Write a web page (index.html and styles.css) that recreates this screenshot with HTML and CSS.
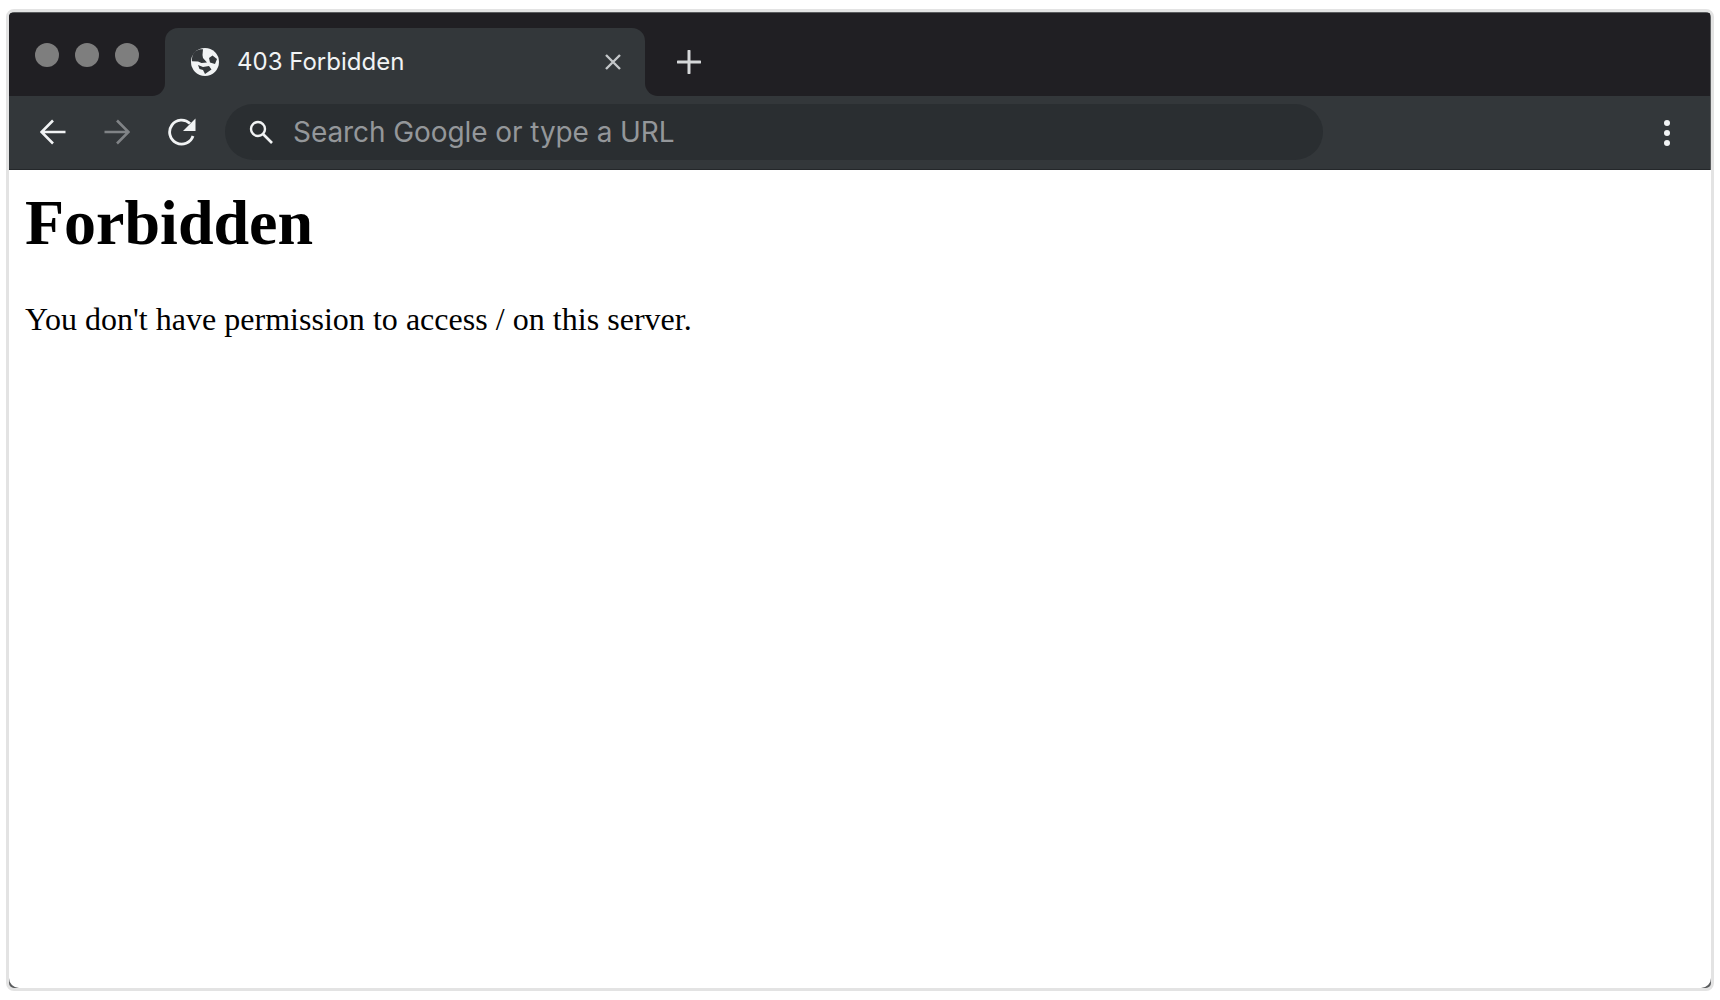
FILE: index.html
```html
<!DOCTYPE html>
<html lang="en">
<head>
<meta charset="utf-8">
<title>403 Forbidden</title>
<link rel="stylesheet" href="styles.css">
</head>
<body>
<div class="window">
  <header class="tabstrip">
    <div class="lights">
      <span class="light"></span><span class="light"></span><span class="light"></span>
    </div>
    <div class="tab-slot">
      <div class="tab">
        <svg class="globe" width="30" height="30" viewBox="0 0 30 30"><circle cx="15" cy="15" r="14" fill="#f1f3f4"/><path d="M5 4.500C8 2.500 10.500 2 13 2.200L12.500 8 13 11l4 4.500-5.500.5-3.500-1.500-6-.2C1.800 10 2.500 7 5 4.500Z" fill="#33373a"/><path d="M19 11l3.500-2.500L27 12l-2 5-5-1.500Z" fill="#33373a"/><path d="M8 18l5 2 6-1 2.500 3.500-6.500 4.500-2-4-3.500-1Z" fill="#33373a"/></svg>
        <span class="tab-title">403 Forbidden</span>
        <svg class="close" width="18" height="18" viewBox="0 0 18 18"><path d="M2 2l14 14M16 2L2 16" stroke="#c4c7c9" stroke-width="2.400" fill="none"/></svg>
      </div>
    </div>
    <div class="strip-rest">
      <svg class="plus" width="24" height="24" viewBox="0 0 24 24"><path d="M12 1v22M1 12h22" stroke="#d5d7d9" stroke-width="3" stroke-linecap="round" fill="none"/></svg>
    </div>
  </header>
  <nav class="toolbar">
    <svg class="nav-icon" width="26" height="26" viewBox="0 0 26 26"><path d="M25.500 13H2M13 1.500L1.500 13 13 24.500" stroke="#f1f3f4" stroke-width="2.600" fill="none"/></svg>
    <svg class="nav-icon" width="26" height="26" viewBox="0 0 26 26"><path d="M.5 13H24M13 1.500L24.500 13 13 24.500" stroke="#808386" stroke-width="2.600" fill="none"/></svg>
    <svg class="nav-icon" width="28" height="28" viewBox="0 0 28 28"><path d="M25 18A12 12 0 1 1 22 5.500" stroke="#f1f3f4" stroke-width="2.800" fill="none"/><path d="M27.500 .5v12.500H15Z" fill="#f1f3f4"/></svg>
    <div class="omnibox">
      <svg class="search" width="24" height="24" viewBox="0 0 24 24"><circle cx="9" cy="9" r="7" stroke="#f1f3f4" stroke-width="2.400" fill="none"/><path d="M14 14l9 9" stroke="#f1f3f4" stroke-width="2.600" fill="none"/></svg>
      <span class="placeholder">Search Google or type a URL</span>
    </div>
    <div class="kebab"><span></span><span></span><span></span></div>
  </nav>
  <main class="content">
    <h1>Forbidden</h1>
    <p>You don't have permission to access / on this server.</p>
  </main>
</div>
</body>
</html>
```
FILE: styles.css
```css
html, body {
  margin: 0;
  height: 100%;
  background: #fff;
}
body {
  padding: 9px 6px;
  box-sizing: border-box;
}
.window {
  height: 982px;
  box-sizing: border-box;
  border: 3px solid #e3e3e3;
  border-radius: 8px;
  background: #5a5c5e;
  display: flex;
  flex-direction: column;
  overflow: hidden;
}
.tabstrip {
  flex: none;
  height: 83px;
  margin: 1px 1px 0 0;
  display: flex;
  background: #33373a;
}
.lights {
  width: 156px;
  box-sizing: border-box;
  padding: 30px 0 0 26px;
  display: flex;
  gap: 16px;
  background: #201f23;
  border-bottom-right-radius: 13px;
}
.light {
  width: 24px;
  height: 24px;
  border-radius: 50%;
  background: #7e7e7e;
}
.tab-slot {
  width: 480px;
  padding-top: 15px;
  box-sizing: border-box;
  background: #201f23;
}
.tab {
  height: 68px;
  background: #33373a;
  border-radius: 13px 13px 0 0;
  display: flex;
  align-items: flex-start;
  box-sizing: border-box;
  padding: 19px 23px 0 25px;
}
.globe {
  flex: none;
}
.tab-title {
  margin-left: 17px;
  font: 400 24px/30px Inter, "Noto Sans", sans-serif;
  color: #f1f3f4;
  flex: 1;
}
.close {
  margin-top: 6px;
}
.strip-rest {
  flex: 1;
  background: #201f23;
  border-bottom-left-radius: 13px;
  padding: 37px 0 0 32px;
}
.plus {
  display: block;
}
.toolbar {
  flex: none;
  height: 74px;
  margin-right: 1px;
  background: #33373a;
  border-bottom: 1px solid #24272a;
  box-sizing: border-box;
  display: flex;
  align-items: center;
  padding: 0 40px 0 31px;
}
.nav-icon {
  flex: none;
  margin: -2px 38px 0 0;
}
.nav-icon:nth-child(3) {
  margin-right: 29px;
}
.omnibox {
  width: 1098px;
  height: 56px;
  margin-top: -1px;
  border-radius: 28px;
  background: #2a2e31;
  display: flex;
  align-items: center;
  padding-left: 24px;
  box-sizing: border-box;
}
.search {
  flex: none;
}
.placeholder {
  margin-left: 20px;
  font: 400 28px/36px Inter, "Noto Sans", sans-serif;
  letter-spacing: -0.08px;
  color: #94979a;
}
.kebab {
  margin-left: auto;
  display: flex;
  flex-direction: column;
  gap: 4px;
}
.kebab span {
  width: 6px;
  height: 6px;
  border-radius: 50%;
  background: #f1f3f4;
}
.content {
  flex: 1;
  background: #fff;
  border-radius: 0 0 10px 10px;
  padding: 16px 16px;
  font-family: "Liberation Serif", "Times New Roman", serif;
  color: #000;
}
h1 {
  margin: 0;
  font-size: 64px;
  line-height: 74px;
  font-weight: 700;
}
p {
  margin: 41px 0 0;
  font-size: 32px;
  line-height: 37px;
  word-spacing: 0.12px;
}
```
